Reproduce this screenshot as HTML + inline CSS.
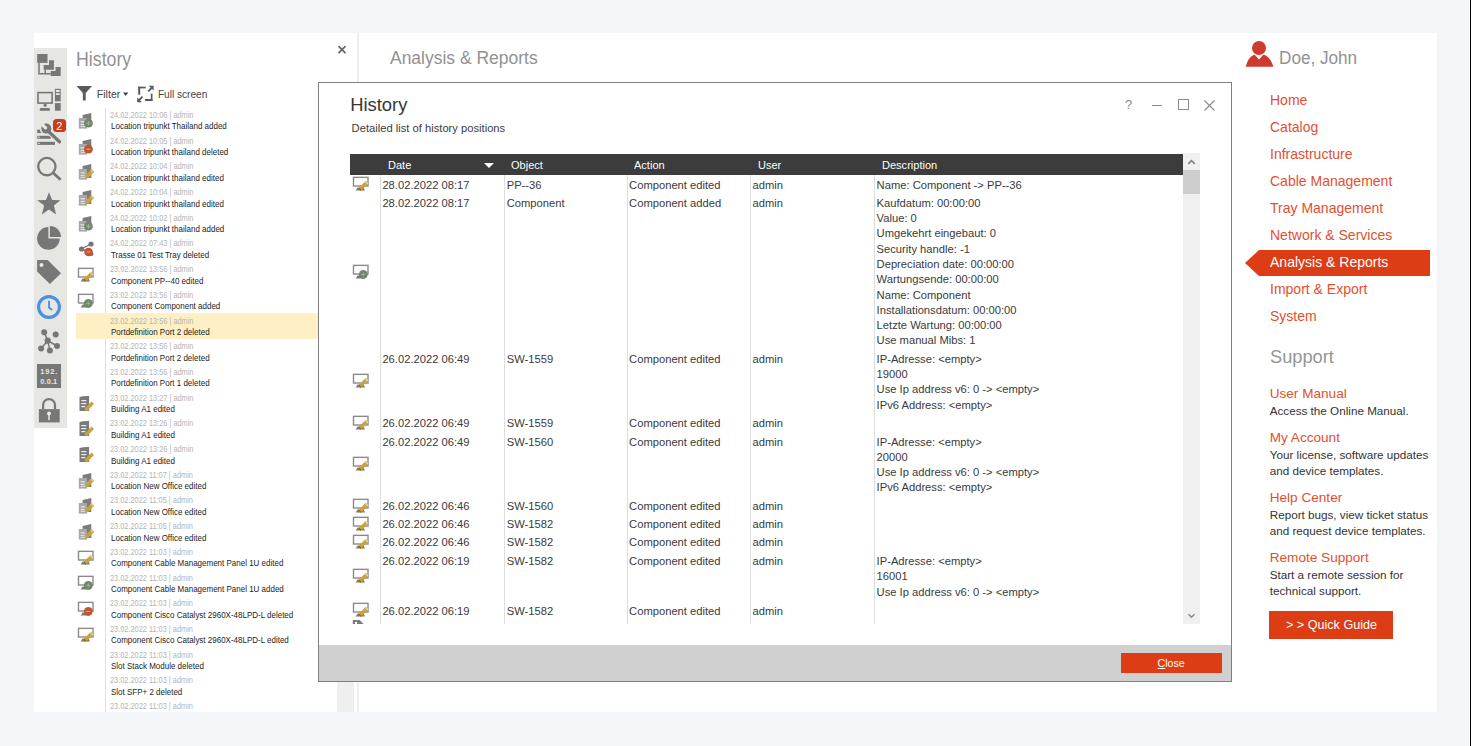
<!DOCTYPE html>
<html><head><meta charset="utf-8"><title>History</title>
<style>
html,body{margin:0;padding:0;}
body{width:1471px;height:746px;background:#f4f5f9;position:relative;overflow:hidden;font-family:"Liberation Sans", sans-serif;}
.t{position:absolute;white-space:nowrap;line-height:1;}
.r{position:absolute;}
svg.r{overflow:visible}
</style></head><body>
<div class="r" style="left:1469.00px;top:0.00px;width:1.00px;height:746.00px;background:#fbfbfd;"></div>
<div class="r" style="left:1470.00px;top:0.00px;width:1.00px;height:746.00px;background:#000000;"></div>
<div class="r" style="left:34.00px;top:33.00px;width:1403.00px;height:679.00px;background:#ffffff;"></div>
<div class="r" style="left:34.00px;top:48.00px;width:33.00px;height:380.20px;background:#e6e6e3;"></div>
<svg class="r" style="left:34.00px;top:50.00px" width="30" height="30" viewBox="0 0 30 30">
<rect x="3.2" y="4" width="10.3" height="8.9" fill="#777777"/>
<path d="M15 10.25 H19.9 V19.7 H9.65 V15 H15 Z" fill="#777777"/>
<path d="M21.5 17 H26.7 V26.1 H16.7 V21.1 H21.5 Z" fill="#777777"/>
<path d="M5 12.9 V23.8 H16.7 M11.3 19.7 V23.8" stroke="#777777" stroke-width="1.5" fill="none"/>
</svg>
<svg class="r" style="left:34.00px;top:85.00px" width="30" height="30" viewBox="0 0 30 30">
<rect x="4" y="7.6" width="14.1" height="10.5" fill="none" stroke="#777777" stroke-width="1.6"/>
<rect x="9.65" y="18.5" width="2.9" height="3.2" fill="#777777"/>
<path d="M6.8 23.1 H14.9 Q15.9 23.1 15.9 24.1 V25.7 H5.8 V24.1 Q5.8 23.1 6.8 23.1 Z" fill="#777777"/>
<rect x="20.9" y="3.8" width="5.8" height="12.5" fill="#777777"/>
<rect x="21.9" y="5" width="3.8" height="2" fill="#e6e6e2"/>
<rect x="21.9" y="8.2" width="3.8" height="1.8" fill="#e6e6e2"/>
<rect x="20.9" y="18.1" width="5.8" height="7.6" fill="#777777"/>
</svg>
<svg class="r" style="left:34.00px;top:116.00px" width="34" height="34" viewBox="0 0 34 34">
<rect x="3.2" y="13.7" width="4.8" height="3.4" fill="#777777"/>
<rect x="3.2" y="19.8" width="13.7" height="3" fill="#777777"/>
<rect x="3.2" y="25.8" width="17.8" height="3.1" fill="#777777"/>
<rect x="4.2" y="20.7" width="1.5" height="1.2" fill="#e6e6e2"/>
<rect x="4.2" y="26.8" width="1.5" height="1.2" fill="#e6e6e2"/>
<path d="M14.5 15.5 L25.5 25.8" stroke="#e6e6e2" stroke-width="5.4" stroke-linecap="round"/>
<circle cx="12.3" cy="12.6" r="6.6" fill="#e6e6e2"/>
<path d="M14.5 15.5 L25.5 25.8" stroke="#777777" stroke-width="3.3" stroke-linecap="round"/>
<circle cx="12.3" cy="12.6" r="5" fill="#777777"/>
<path d="M11.6 11.9 L6 6.3" stroke="#e6e6e2" stroke-width="3.2" stroke-linecap="round"/>
</svg>
<div class="r" style="left:52.70px;top:119.00px;width:13.00px;height:13.20px;background:#cc3a1a;border-radius:3.5px"></div>
<div class="t" style="left:56.20px;top:120.59px;font-size:11px;color:#ffffff;">2</div>
<svg class="r" style="left:34.00px;top:152.00px" width="30" height="30" viewBox="0 0 30 30">
<circle cx="12.85" cy="14.6" r="8.65" fill="none" stroke="#777777" stroke-width="2.3"/>
<path d="M19 20.8 L26.6 27.8" stroke="#777777" stroke-width="2.9"/>
</svg>
<svg class="r" style="left:36.00px;top:191.00px" width="26" height="25" viewBox="0 0 26 25">
<path d="M13 1.3 L16.1 9 L24.5 9.2 L17.9 14.6 L20.1 23.4 L13 18.5 L5.9 23.4 L8.1 14.6 L1.1 9.2 L9.9 9 Z" fill="#777777"/>
</svg>
<svg class="r" style="left:34.00px;top:222.00px" width="30" height="30" viewBox="0 0 30 30">
<path d="M14.4 5.1 A11.3 11.3 0 1 0 25.7 16.4 L14.4 16.4 Z" fill="#777777"/>
<path d="M15.9 4 A11.1 11.1 0 0 1 27 15 L15.9 15 Z" fill="#777777"/>
</svg>
<svg class="r" style="left:34.00px;top:256.00px" width="30" height="30" viewBox="0 0 30 30">
<path d="M3.1 4 L13.7 4 L27 17.3 L15.9 28 L3.1 15.6 Z" fill="#777777"/>
<circle cx="7.5" cy="9.1" r="2" fill="#e6e6e2"/>
</svg>
<svg class="r" style="left:34.00px;top:292.00px" width="30" height="30" viewBox="0 0 30 30">
<circle cx="15" cy="15" r="10.4" fill="none" stroke="#4a8fe8" stroke-width="3.1"/>
<path d="M15 8.8 V15.6 L18.1 18.1" stroke="#4a8fe8" stroke-width="1.9" fill="none"/>
</svg>
<svg class="r" style="left:34.00px;top:327.00px" width="30" height="30" viewBox="0 0 30 30">
<path d="M10.2 5.3 L13.7 13.7 L7.1 21.6 M13.7 13.7 L15.9 23.4 M13.7 13.7 L23 19" stroke="#777777" stroke-width="1.5" fill="none"/>
<circle cx="10.2" cy="5.3" r="3" fill="#777777"/>
<circle cx="21.7" cy="7.5" r="3" fill="#777777"/>
<circle cx="13.7" cy="13.7" r="3.1" fill="#777777"/>
<circle cx="7.1" cy="21.6" r="3" fill="#777777"/>
<circle cx="15.9" cy="23.4" r="3" fill="#777777"/>
<circle cx="23" cy="19" r="3" fill="#777777"/>
</svg>
<div class="r" style="left:37.10px;top:364.00px;width:23.90px;height:23.90px;background:#777777;"></div>
<div class="t" style="left:40.20px;top:367.94px;font-size:7.4px;color:#e8e8e8;letter-spacing:0.9px;font-weight:bold">192.</div>
<div class="t" style="left:40.20px;top:377.64px;font-size:7.4px;color:#e8e8e8;letter-spacing:0.15px;font-weight:bold">0.0.1</div>
<svg class="r" style="left:36.00px;top:397.00px" width="26" height="27" viewBox="0 0 26 27">
<path d="M7.1 12.1 V8.05 A5.95 5.95 0 0 1 19 8.05 V12.1" stroke="#777777" stroke-width="2.2" fill="none"/>
<rect x="2.9" y="12.1" width="20.8" height="13.3" fill="#777777"/>
<circle cx="13" cy="16.5" r="1.9" fill="#eeeeee"/>
<rect x="12.3" y="16.5" width="1.4" height="6.7" fill="#eeeeee"/>
</svg>
<div class="t" style="left:76.10px;top:49.99px;font-size:19.5px;color:#929292;transform:scaleX(0.91);transform-origin:0 0;">History</div>
<svg class="r" style="left:337.00px;top:45.00px" width="10" height="10" viewBox="0 0 10 10"><path d="M1.5 1.2 L8.5 8.2 M8.5 1.2 L1.5 8.2" stroke="#666" stroke-width="1.7"/></svg>
<svg class="r" style="left:74.00px;top:83.00px" width="20" height="20" viewBox="0 0 20 20"><path d="M2.6 3.1 H18 L11.7 10 V17.4 H8.85 V10 Z" fill="#5a5a5a"/></svg>
<div class="t" style="left:96.80px;top:88.93px;font-size:10.6px;color:#444;">Filter</div>
<svg class="r" style="left:122.00px;top:91.00px" width="8" height="6" viewBox="0 0 8 6"><path d="M1.1 1.4 H6.3 L3.7 4.9 Z" fill="#444"/></svg>
<svg class="r" style="left:136.00px;top:84.00px" width="20" height="20" viewBox="0 0 20 20"><g fill="#5a5a5a">
<rect x="2.2" y="2.7" width="7.5" height="1.7"/><rect x="2.2" y="2.7" width="2" height="8"/>
<rect x="9.1" y="15" width="7.4" height="2"/><rect x="14.8" y="9.6" width="1.7" height="7.4"/>
</g><g stroke="#5a5a5a" stroke-width="1.8" fill="none">
<path d="M12.2 7.3 L16.6 3"/><path d="M6.5 12.7 L2.2 17"/></g>
<path d="M17.6 1.7 L17.6 6.6 L12.7 1.7 Z" fill="#5a5a5a"/>
<path d="M1.2 18.3 L1.2 13.4 L6.1 18.3 Z" fill="#5a5a5a"/>
</svg>
<div class="t" style="left:157.90px;top:89.85px;font-size:10.1px;color:#444;">Full screen</div>
<div class="r" style="left:105.00px;top:107.80px;width:1.00px;height:604.20px;background:#e0e0e0;"></div>
<div class="r" style="left:75.60px;top:313.30px;width:260.00px;height:25.70px;background:#fef0c4;"></div>
<div class="t" style="left:110.00px;top:111.96px;font-size:8.2px;color:#b4b4b4;transform:scaleX(0.9);transform-origin:0 0;">24.02.2022 10:06 | admin</div>
<div class="t" style="left:111.00px;top:122.40px;font-size:8.5px;color:#1c1c1c;transform:scaleX(0.94);transform-origin:0 0;">Location tripunkt Thailand added</div>
<svg class="r" style="left:78.00px;top:112.80px" width="16" height="16" viewBox="0 0 16 16"><path d="M4.6 2.1 L13.3 0.1 V14.1 H4.6 Z" fill="#7c7c7c"/><rect x="0.8" y="5" width="8.2" height="10.6" fill="#a8a8a8"/><rect x="2.6" y="8.2" width="4.2" height="1.2" fill="#e6e6e6"/><rect x="2.6" y="10.9" width="4.2" height="1" fill="#e6e6e6"/><rect x="2.6" y="12.8" width="4.2" height="1" fill="#e6e6e6"/><circle cx="10.4" cy="10.2" r="4.4" fill="#718868"/><path d="M10.4 8 V12.4 M8.2 10.2 H12.6" stroke="#a6b8a2" stroke-width="0.9"/></svg>
<div class="t" style="left:110.00px;top:137.66px;font-size:8.2px;color:#b4b4b4;transform:scaleX(0.9);transform-origin:0 0;">24.02.2022 10:05 | admin</div>
<div class="t" style="left:111.00px;top:148.10px;font-size:8.5px;color:#1c1c1c;transform:scaleX(0.94);transform-origin:0 0;">Location tripunkt thailand deleted</div>
<svg class="r" style="left:78.00px;top:138.50px" width="16" height="16" viewBox="0 0 16 16"><path d="M4.6 2.1 L13.3 0.1 V14.1 H4.6 Z" fill="#7c7c7c"/><rect x="0.8" y="5" width="8.2" height="10.6" fill="#a8a8a8"/><rect x="2.6" y="8.2" width="4.2" height="1.2" fill="#e6e6e6"/><rect x="2.6" y="10.9" width="4.2" height="1" fill="#e6e6e6"/><rect x="2.6" y="12.8" width="4.2" height="1" fill="#e6e6e6"/><circle cx="10.4" cy="10.2" r="4.4" fill="#c4532b"/><path d="M8.4 10.2 H12.4" stroke="#e6a888" stroke-width="1.1"/></svg>
<div class="t" style="left:110.00px;top:163.36px;font-size:8.2px;color:#b4b4b4;transform:scaleX(0.9);transform-origin:0 0;">24.02.2022 10:04 | admin</div>
<div class="t" style="left:111.00px;top:173.80px;font-size:8.5px;color:#1c1c1c;transform:scaleX(0.94);transform-origin:0 0;">Location tripunkt thailand edited</div>
<svg class="r" style="left:78.00px;top:164.20px" width="16" height="16" viewBox="0 0 16 16"><path d="M4.6 2.1 L13.3 0.1 V14.1 H4.6 Z" fill="#7c7c7c"/><rect x="0.8" y="5" width="8.2" height="10.6" fill="#a8a8a8"/><rect x="2.6" y="8.2" width="4.2" height="1.2" fill="#e6e6e6"/><rect x="2.6" y="10.9" width="4.2" height="1" fill="#e6e6e6"/><rect x="2.6" y="12.8" width="4.2" height="1" fill="#e6e6e6"/><path d="M8.3 13 L14.9 6.4" stroke="#c9a23c" stroke-width="3.9" stroke-linecap="butt"/><path d="M13.6 7.7 L14.9 6.4" stroke="#d8c890" stroke-width="3.9"/></svg>
<div class="t" style="left:110.00px;top:189.06px;font-size:8.2px;color:#b4b4b4;transform:scaleX(0.9);transform-origin:0 0;">24.02.2022 10:04 | admin</div>
<div class="t" style="left:111.00px;top:199.50px;font-size:8.5px;color:#1c1c1c;transform:scaleX(0.94);transform-origin:0 0;">Location tripunkt thailand edited</div>
<svg class="r" style="left:78.00px;top:189.90px" width="16" height="16" viewBox="0 0 16 16"><path d="M4.6 2.1 L13.3 0.1 V14.1 H4.6 Z" fill="#7c7c7c"/><rect x="0.8" y="5" width="8.2" height="10.6" fill="#a8a8a8"/><rect x="2.6" y="8.2" width="4.2" height="1.2" fill="#e6e6e6"/><rect x="2.6" y="10.9" width="4.2" height="1" fill="#e6e6e6"/><rect x="2.6" y="12.8" width="4.2" height="1" fill="#e6e6e6"/><path d="M8.3 13 L14.9 6.4" stroke="#c9a23c" stroke-width="3.9" stroke-linecap="butt"/><path d="M13.6 7.7 L14.9 6.4" stroke="#d8c890" stroke-width="3.9"/></svg>
<div class="t" style="left:110.00px;top:214.76px;font-size:8.2px;color:#b4b4b4;transform:scaleX(0.9);transform-origin:0 0;">24.02.2022 10:02 | admin</div>
<div class="t" style="left:111.00px;top:225.20px;font-size:8.5px;color:#1c1c1c;transform:scaleX(0.94);transform-origin:0 0;">Location tripunkt thailand added</div>
<svg class="r" style="left:78.00px;top:215.60px" width="16" height="16" viewBox="0 0 16 16"><path d="M4.6 2.1 L13.3 0.1 V14.1 H4.6 Z" fill="#7c7c7c"/><rect x="0.8" y="5" width="8.2" height="10.6" fill="#a8a8a8"/><rect x="2.6" y="8.2" width="4.2" height="1.2" fill="#e6e6e6"/><rect x="2.6" y="10.9" width="4.2" height="1" fill="#e6e6e6"/><rect x="2.6" y="12.8" width="4.2" height="1" fill="#e6e6e6"/><circle cx="10.4" cy="10.2" r="4.4" fill="#718868"/><path d="M10.4 8 V12.4 M8.2 10.2 H12.6" stroke="#a6b8a2" stroke-width="0.9"/></svg>
<div class="t" style="left:110.00px;top:240.46px;font-size:8.2px;color:#b4b4b4;transform:scaleX(0.9);transform-origin:0 0;">24.02.2022 07:43 | admin</div>
<div class="t" style="left:111.00px;top:250.90px;font-size:8.5px;color:#1c1c1c;transform:scaleX(0.94);transform-origin:0 0;">Trasse 01 Test Tray deleted</div>
<svg class="r" style="left:78.00px;top:241.30px" width="16" height="16" viewBox="0 0 16 16"><path d="M3.5 8 L13 3 M3.5 8 L11 11" stroke="#777" stroke-width="1.4"/><circle cx="3.5" cy="8" r="2.6" fill="#777"/><circle cx="13" cy="3" r="2.6" fill="#777"/><circle cx="13.5" cy="13" r="2" fill="#777"/><circle cx="10.5" cy="11" r="4.3" fill="#c4532b"/><path d="M8.5 11 H12.5" stroke="#e6a888" stroke-width="1"/></svg>
<div class="t" style="left:110.00px;top:266.16px;font-size:8.2px;color:#b4b4b4;transform:scaleX(0.9);transform-origin:0 0;">23.02.2022 13:56 | admin</div>
<div class="t" style="left:111.00px;top:276.60px;font-size:8.5px;color:#1c1c1c;transform:scaleX(0.94);transform-origin:0 0;">Component PP--40 edited</div>
<svg class="r" style="left:77.40px;top:267.80px" width="16" height="16" viewBox="0 0 16 16"><rect x="1.5" y="0.35" width="14.5" height="8.65" fill="#fff" stroke="#8a8a8a" stroke-width="1.4"/><path d="M3.6 13.6 L5.6 10.6 H11.5 L13 13.6 Z" fill="#7a7a7a"/><path d="M7.4 12.8 L15.2 5" stroke="#c9a23c" stroke-width="3.7" stroke-linecap="butt"/><path d="M13.9 6.3 L15.2 5" stroke="#e0d0a0" stroke-width="3.7"/><path d="M7.4 12.8 L8.4 11.8" stroke="#8a6a20" stroke-width="3"/></svg>
<div class="t" style="left:110.00px;top:291.86px;font-size:8.2px;color:#b4b4b4;transform:scaleX(0.9);transform-origin:0 0;">23.02.2022 13:56 | admin</div>
<div class="t" style="left:111.00px;top:302.30px;font-size:8.5px;color:#1c1c1c;transform:scaleX(0.94);transform-origin:0 0;">Component Component added</div>
<svg class="r" style="left:77.40px;top:293.50px" width="16" height="16" viewBox="0 0 16 16"><rect x="1.5" y="0.35" width="14.5" height="8.65" fill="#fff" stroke="#8a8a8a" stroke-width="1.4"/><path d="M3.6 13.6 L5.6 10.6 H11.5 L13 13.6 Z" fill="#7a7a7a"/><circle cx="11.3" cy="9.4" r="4.4" fill="#718868"/><path d="M11.3 7.4 V11.4 M9.3 9.4 H13.3" stroke="#a6b8a2" stroke-width="0.8"/></svg>
<div class="t" style="left:110.00px;top:317.56px;font-size:8.2px;color:#b4b4b4;transform:scaleX(0.9);transform-origin:0 0;">23.02.2022 13:56 | admin</div>
<div class="t" style="left:111.00px;top:328.00px;font-size:8.5px;color:#1c1c1c;transform:scaleX(0.94);transform-origin:0 0;">Portdefinition Port 2 deleted</div>
<div class="t" style="left:110.00px;top:343.26px;font-size:8.2px;color:#b4b4b4;transform:scaleX(0.9);transform-origin:0 0;">23.02.2022 13:56 | admin</div>
<div class="t" style="left:111.00px;top:353.70px;font-size:8.5px;color:#1c1c1c;transform:scaleX(0.94);transform-origin:0 0;">Portdefinition Port 2 deleted</div>
<div class="t" style="left:110.00px;top:368.96px;font-size:8.2px;color:#b4b4b4;transform:scaleX(0.9);transform-origin:0 0;">23.02.2022 13:56 | admin</div>
<div class="t" style="left:111.00px;top:379.40px;font-size:8.5px;color:#1c1c1c;transform:scaleX(0.94);transform-origin:0 0;">Portdefinition Port 1 deleted</div>
<div class="t" style="left:110.00px;top:394.66px;font-size:8.2px;color:#b4b4b4;transform:scaleX(0.9);transform-origin:0 0;">23.02.2022 13:27 | admin</div>
<div class="t" style="left:111.00px;top:405.10px;font-size:8.5px;color:#1c1c1c;transform:scaleX(0.94);transform-origin:0 0;">Building A1 edited</div>
<svg class="r" style="left:78.00px;top:395.50px" width="16" height="16" viewBox="0 0 16 16"><path d="M1.5 1 Q6 -0.3 11.1 0 V14.9 H1.5 Z" fill="#7a7a7a"/><rect x="3.3" y="4" width="5" height="1.2" fill="#eee"/><rect x="3.3" y="7" width="5" height="1.2" fill="#eee"/><rect x="3.3" y="10" width="4" height="1.2" fill="#eee"/><path d="M7.5 14.2 L14.8 6.8" stroke="#c9a23c" stroke-width="3.4" stroke-linecap="butt"/></svg>
<div class="t" style="left:110.00px;top:420.36px;font-size:8.2px;color:#b4b4b4;transform:scaleX(0.9);transform-origin:0 0;">23.02.2022 13:26 | admin</div>
<div class="t" style="left:111.00px;top:430.80px;font-size:8.5px;color:#1c1c1c;transform:scaleX(0.94);transform-origin:0 0;">Building A1 edited</div>
<svg class="r" style="left:78.00px;top:421.20px" width="16" height="16" viewBox="0 0 16 16"><path d="M1.5 1 Q6 -0.3 11.1 0 V14.9 H1.5 Z" fill="#7a7a7a"/><rect x="3.3" y="4" width="5" height="1.2" fill="#eee"/><rect x="3.3" y="7" width="5" height="1.2" fill="#eee"/><rect x="3.3" y="10" width="4" height="1.2" fill="#eee"/><path d="M7.5 14.2 L14.8 6.8" stroke="#c9a23c" stroke-width="3.4" stroke-linecap="butt"/></svg>
<div class="t" style="left:110.00px;top:446.06px;font-size:8.2px;color:#b4b4b4;transform:scaleX(0.9);transform-origin:0 0;">23.02.2022 13:26 | admin</div>
<div class="t" style="left:111.00px;top:456.50px;font-size:8.5px;color:#1c1c1c;transform:scaleX(0.94);transform-origin:0 0;">Building A1 edited</div>
<svg class="r" style="left:78.00px;top:446.90px" width="16" height="16" viewBox="0 0 16 16"><path d="M1.5 1 Q6 -0.3 11.1 0 V14.9 H1.5 Z" fill="#7a7a7a"/><rect x="3.3" y="4" width="5" height="1.2" fill="#eee"/><rect x="3.3" y="7" width="5" height="1.2" fill="#eee"/><rect x="3.3" y="10" width="4" height="1.2" fill="#eee"/><path d="M7.5 14.2 L14.8 6.8" stroke="#c9a23c" stroke-width="3.4" stroke-linecap="butt"/></svg>
<div class="t" style="left:110.00px;top:471.76px;font-size:8.2px;color:#b4b4b4;transform:scaleX(0.9);transform-origin:0 0;">23.02.2022 11:07 | admin</div>
<div class="t" style="left:111.00px;top:482.20px;font-size:8.5px;color:#1c1c1c;transform:scaleX(0.94);transform-origin:0 0;">Location New Office edited</div>
<svg class="r" style="left:78.00px;top:472.60px" width="16" height="16" viewBox="0 0 16 16"><path d="M4.6 2.1 L13.3 0.1 V14.1 H4.6 Z" fill="#7c7c7c"/><rect x="0.8" y="5" width="8.2" height="10.6" fill="#a8a8a8"/><rect x="2.6" y="8.2" width="4.2" height="1.2" fill="#e6e6e6"/><rect x="2.6" y="10.9" width="4.2" height="1" fill="#e6e6e6"/><rect x="2.6" y="12.8" width="4.2" height="1" fill="#e6e6e6"/><path d="M8.3 13 L14.9 6.4" stroke="#c9a23c" stroke-width="3.9" stroke-linecap="butt"/><path d="M13.6 7.7 L14.9 6.4" stroke="#d8c890" stroke-width="3.9"/></svg>
<div class="t" style="left:110.00px;top:497.46px;font-size:8.2px;color:#b4b4b4;transform:scaleX(0.9);transform-origin:0 0;">23.02.2022 11:05 | admin</div>
<div class="t" style="left:111.00px;top:507.90px;font-size:8.5px;color:#1c1c1c;transform:scaleX(0.94);transform-origin:0 0;">Location New Office edited</div>
<svg class="r" style="left:78.00px;top:498.30px" width="16" height="16" viewBox="0 0 16 16"><path d="M4.6 2.1 L13.3 0.1 V14.1 H4.6 Z" fill="#7c7c7c"/><rect x="0.8" y="5" width="8.2" height="10.6" fill="#a8a8a8"/><rect x="2.6" y="8.2" width="4.2" height="1.2" fill="#e6e6e6"/><rect x="2.6" y="10.9" width="4.2" height="1" fill="#e6e6e6"/><rect x="2.6" y="12.8" width="4.2" height="1" fill="#e6e6e6"/><path d="M8.3 13 L14.9 6.4" stroke="#c9a23c" stroke-width="3.9" stroke-linecap="butt"/><path d="M13.6 7.7 L14.9 6.4" stroke="#d8c890" stroke-width="3.9"/></svg>
<div class="t" style="left:110.00px;top:523.16px;font-size:8.2px;color:#b4b4b4;transform:scaleX(0.9);transform-origin:0 0;">23.02.2022 11:05 | admin</div>
<div class="t" style="left:111.00px;top:533.60px;font-size:8.5px;color:#1c1c1c;transform:scaleX(0.94);transform-origin:0 0;">Location New Office edited</div>
<svg class="r" style="left:78.00px;top:524.00px" width="16" height="16" viewBox="0 0 16 16"><path d="M4.6 2.1 L13.3 0.1 V14.1 H4.6 Z" fill="#7c7c7c"/><rect x="0.8" y="5" width="8.2" height="10.6" fill="#a8a8a8"/><rect x="2.6" y="8.2" width="4.2" height="1.2" fill="#e6e6e6"/><rect x="2.6" y="10.9" width="4.2" height="1" fill="#e6e6e6"/><rect x="2.6" y="12.8" width="4.2" height="1" fill="#e6e6e6"/><path d="M8.3 13 L14.9 6.4" stroke="#c9a23c" stroke-width="3.9" stroke-linecap="butt"/><path d="M13.6 7.7 L14.9 6.4" stroke="#d8c890" stroke-width="3.9"/></svg>
<div class="t" style="left:110.00px;top:548.86px;font-size:8.2px;color:#b4b4b4;transform:scaleX(0.9);transform-origin:0 0;">23.02.2022 11:03 | admin</div>
<div class="t" style="left:111.00px;top:559.30px;font-size:8.5px;color:#1c1c1c;transform:scaleX(0.94);transform-origin:0 0;">Component Cable Management Panel 1U edited</div>
<svg class="r" style="left:77.40px;top:550.50px" width="16" height="16" viewBox="0 0 16 16"><rect x="1.5" y="0.35" width="14.5" height="8.65" fill="#fff" stroke="#8a8a8a" stroke-width="1.4"/><path d="M3.6 13.6 L5.6 10.6 H11.5 L13 13.6 Z" fill="#7a7a7a"/><path d="M7.4 12.8 L15.2 5" stroke="#c9a23c" stroke-width="3.7" stroke-linecap="butt"/><path d="M13.9 6.3 L15.2 5" stroke="#e0d0a0" stroke-width="3.7"/><path d="M7.4 12.8 L8.4 11.8" stroke="#8a6a20" stroke-width="3"/></svg>
<div class="t" style="left:110.00px;top:574.56px;font-size:8.2px;color:#b4b4b4;transform:scaleX(0.9);transform-origin:0 0;">23.02.2022 11:03 | admin</div>
<div class="t" style="left:111.00px;top:585.00px;font-size:8.5px;color:#1c1c1c;transform:scaleX(0.94);transform-origin:0 0;">Component Cable Management Panel 1U added</div>
<svg class="r" style="left:77.40px;top:576.20px" width="16" height="16" viewBox="0 0 16 16"><rect x="1.5" y="0.35" width="14.5" height="8.65" fill="#fff" stroke="#8a8a8a" stroke-width="1.4"/><path d="M3.6 13.6 L5.6 10.6 H11.5 L13 13.6 Z" fill="#7a7a7a"/><circle cx="11.3" cy="9.4" r="4.4" fill="#718868"/><path d="M11.3 7.4 V11.4 M9.3 9.4 H13.3" stroke="#a6b8a2" stroke-width="0.8"/></svg>
<div class="t" style="left:110.00px;top:600.26px;font-size:8.2px;color:#b4b4b4;transform:scaleX(0.9);transform-origin:0 0;">23.02.2022 11:03 | admin</div>
<div class="t" style="left:111.00px;top:610.70px;font-size:8.5px;color:#1c1c1c;transform:scaleX(0.94);transform-origin:0 0;">Component Cisco Catalyst 2960X-48LPD-L deleted</div>
<svg class="r" style="left:77.40px;top:601.90px" width="16" height="16" viewBox="0 0 16 16"><rect x="1.5" y="0.35" width="14.5" height="8.65" fill="#fff" stroke="#8a8a8a" stroke-width="1.4"/><path d="M3.6 13.6 L5.6 10.6 H11.5 L13 13.6 Z" fill="#7a7a7a"/><circle cx="11.3" cy="9.4" r="4.4" fill="#c4532b"/><path d="M9.3 9.4 H13.3" stroke="#e6a888" stroke-width="1"/></svg>
<div class="t" style="left:110.00px;top:625.96px;font-size:8.2px;color:#b4b4b4;transform:scaleX(0.9);transform-origin:0 0;">23.02.2022 11:03 | admin</div>
<div class="t" style="left:111.00px;top:636.40px;font-size:8.5px;color:#1c1c1c;transform:scaleX(0.94);transform-origin:0 0;">Component Cisco Catalyst 2960X-48LPD-L edited</div>
<svg class="r" style="left:77.40px;top:627.60px" width="16" height="16" viewBox="0 0 16 16"><rect x="1.5" y="0.35" width="14.5" height="8.65" fill="#fff" stroke="#8a8a8a" stroke-width="1.4"/><path d="M3.6 13.6 L5.6 10.6 H11.5 L13 13.6 Z" fill="#7a7a7a"/><path d="M7.4 12.8 L15.2 5" stroke="#c9a23c" stroke-width="3.7" stroke-linecap="butt"/><path d="M13.9 6.3 L15.2 5" stroke="#e0d0a0" stroke-width="3.7"/><path d="M7.4 12.8 L8.4 11.8" stroke="#8a6a20" stroke-width="3"/></svg>
<div class="t" style="left:110.00px;top:651.66px;font-size:8.2px;color:#b4b4b4;transform:scaleX(0.9);transform-origin:0 0;">23.02.2022 11:03 | admin</div>
<div class="t" style="left:111.00px;top:662.10px;font-size:8.5px;color:#1c1c1c;transform:scaleX(0.94);transform-origin:0 0;">Slot Stack Module deleted</div>
<div class="t" style="left:110.00px;top:677.36px;font-size:8.2px;color:#b4b4b4;transform:scaleX(0.9);transform-origin:0 0;">23.02.2022 11:03 | admin</div>
<div class="t" style="left:111.00px;top:687.80px;font-size:8.5px;color:#1c1c1c;transform:scaleX(0.94);transform-origin:0 0;">Slot SFP+ 2 deleted</div>
<div class="t" style="left:110.00px;top:703.06px;font-size:8.2px;color:#b4b4b4;transform:scaleX(0.9);transform-origin:0 0;">23.02.2022 11:03 | admin</div>
<div class="r" style="left:34.00px;top:712.00px;width:310.00px;height:34.00px;background:#f4f5f9;"></div>
<div class="r" style="left:336.80px;top:100.00px;width:17.50px;height:612.00px;background:#efefef;"></div>
<div class="r" style="left:357.00px;top:33.00px;width:1.50px;height:679.00px;background:#eceef2;"></div>
<div class="t" style="left:389.70px;top:48.80px;font-size:18.9px;color:#929292;transform:scaleX(0.925);transform-origin:0 0;">Analysis &amp; Reports</div>
<svg class="r" style="left:1245.00px;top:40.00px" width="29" height="28" viewBox="0 0 29 28"><circle cx="14" cy="8" r="7" fill="#d0392b"/>
<path d="M0.7 26.8 Q3 17 9.5 14.5 L14 19.5 L18.5 14.5 Q25.5 17 28.4 26.8 Z" fill="#d0392b"/></svg>
<div class="t" style="left:1279.30px;top:49.17px;font-size:18.7px;color:#929292;transform:scaleX(0.917);transform-origin:0 0;">Doe, John</div>
<div class="t" style="left:1269.60px;top:92.77px;font-size:14.8px;color:#e2502f;transform:scaleX(0.947);transform-origin:0 0;">Home</div>
<div class="t" style="left:1269.60px;top:119.82px;font-size:14.8px;color:#e2502f;transform:scaleX(0.947);transform-origin:0 0;">Catalog</div>
<div class="t" style="left:1269.60px;top:146.87px;font-size:14.8px;color:#e2502f;transform:scaleX(0.947);transform-origin:0 0;">Infrastructure</div>
<div class="t" style="left:1269.60px;top:173.92px;font-size:14.8px;color:#e2502f;transform:scaleX(0.947);transform-origin:0 0;">Cable Management</div>
<div class="t" style="left:1269.60px;top:200.97px;font-size:14.8px;color:#e2502f;transform:scaleX(0.947);transform-origin:0 0;">Tray Management</div>
<div class="t" style="left:1269.60px;top:228.02px;font-size:14.8px;color:#e2502f;transform:scaleX(0.947);transform-origin:0 0;">Network &amp; Services</div>
<svg class="r" style="left:1245.00px;top:250.00px" width="185" height="26" viewBox="0 0 185 26"><path d="M0 13 L14 0 H185 V26 H14 Z" fill="#dc3d14"/></svg>
<div class="t" style="left:1269.60px;top:255.07px;font-size:14.8px;color:#ffffff;transform:scaleX(0.947);transform-origin:0 0;">Analysis &amp; Reports</div>
<div class="t" style="left:1269.60px;top:282.12px;font-size:14.8px;color:#e2502f;transform:scaleX(0.947);transform-origin:0 0;">Import &amp; Export</div>
<div class="t" style="left:1269.60px;top:309.17px;font-size:14.8px;color:#e2502f;transform:scaleX(0.947);transform-origin:0 0;">System</div>
<div class="t" style="left:1270.00px;top:348.00px;font-size:18.9px;color:#959595;transform:scaleX(0.965);transform-origin:0 0;">Support</div>
<div class="t" style="left:1269.70px;top:387.39px;font-size:13.6px;color:#e2502f;">User Manual</div>
<div class="t" style="left:1269.70px;top:405.00px;font-size:11.7px;color:#333333;">Access the Online Manual.</div>
<div class="t" style="left:1269.70px;top:431.49px;font-size:13.6px;color:#e2502f;">My Account</div>
<div class="t" style="left:1269.70px;top:449.10px;font-size:11.7px;color:#333333;">Your license, software updates</div>
<div class="t" style="left:1269.70px;top:464.80px;font-size:11.7px;color:#333333;">and device templates.</div>
<div class="t" style="left:1269.70px;top:491.29px;font-size:13.6px;color:#e2502f;">Help Center</div>
<div class="t" style="left:1269.70px;top:508.90px;font-size:11.7px;color:#333333;">Report bugs, view ticket status</div>
<div class="t" style="left:1269.70px;top:524.60px;font-size:11.7px;color:#333333;">and request device templates.</div>
<div class="t" style="left:1269.70px;top:551.19px;font-size:13.6px;color:#e2502f;">Remote Support</div>
<div class="t" style="left:1269.70px;top:568.80px;font-size:11.7px;color:#333333;">Start a remote session for</div>
<div class="t" style="left:1269.70px;top:584.50px;font-size:11.7px;color:#333333;">technical support.</div>
<div class="r" style="left:1269.40px;top:610.60px;width:123.50px;height:28.20px;background:#dc3d14;"></div>
<div class="t" style="left:1286.00px;top:618.73px;font-size:12.6px;color:#ffffff;">&gt; &gt; Quick Guide</div>
<div class="r" style="left:318.00px;top:82.00px;width:914.00px;height:600.00px;background:#ffffff;box-sizing:border-box;border:1.5px solid #808080"></div>
<div class="t" style="left:350.20px;top:96.32px;font-size:18.4px;color:#363636;">History</div>
<div class="t" style="left:351.60px;top:122.52px;font-size:11.2px;color:#3c3c3c;">Detailed list of history positions</div>
<div class="t" style="left:1125.00px;top:98.20px;font-size:13px;color:#8a8a8a;">?</div>
<div class="r" style="left:1152.00px;top:104.60px;width:9.50px;height:1.20px;background:#8a8a8a;"></div>
<div class="r" style="left:1177.50px;top:99.10px;width:11.40px;height:10.60px;background:transparent;box-sizing:border-box;border:1.2px solid #8a8a8a"></div>
<svg class="r" style="left:1203.50px;top:99.50px" width="11" height="11" viewBox="0 0 11 11"><path d="M0.5 0.5 L10.5 10.5 M10.5 0.5 L0.5 10.5" stroke="#8a8a8a" stroke-width="1.1"/></svg>
<div class="r" style="left:350.20px;top:153.60px;width:832.80px;height:21.20px;background:#3c3c3c;"></div>
<div class="t" style="left:387.80px;top:160.01px;font-size:11.8px;color:#ffffff;transform:scaleX(0.935);transform-origin:0 0;">Date</div>
<div class="t" style="left:510.90px;top:160.01px;font-size:11.8px;color:#ffffff;transform:scaleX(0.935);transform-origin:0 0;">Object</div>
<div class="t" style="left:633.90px;top:160.01px;font-size:11.8px;color:#ffffff;transform:scaleX(0.935);transform-origin:0 0;">Action</div>
<div class="t" style="left:757.60px;top:160.01px;font-size:11.8px;color:#ffffff;transform:scaleX(0.935);transform-origin:0 0;">User</div>
<div class="t" style="left:881.70px;top:160.01px;font-size:11.8px;color:#ffffff;transform:scaleX(0.935);transform-origin:0 0;">Description</div>
<svg class="r" style="left:483.70px;top:163.20px" width="10" height="5" viewBox="0 0 10 5"><path d="M0 0 H10 L5 5 Z" fill="#ffffff"/></svg>
<div class="r" style="left:380.30px;top:174.80px;width:1.00px;height:449.00px;background:#dedede;"></div>
<div class="r" style="left:504.00px;top:174.80px;width:1.00px;height:449.00px;background:#dedede;"></div>
<div class="r" style="left:626.60px;top:174.80px;width:1.00px;height:449.00px;background:#dedede;"></div>
<div class="r" style="left:750.20px;top:174.80px;width:1.00px;height:449.00px;background:#dedede;"></div>
<div class="r" style="left:874.20px;top:174.80px;width:1.00px;height:449.00px;background:#dedede;"></div>
<div class="r" style="left:1183.00px;top:153.40px;width:17.00px;height:470.60px;background:#f0f0f0;"></div>
<div class="r" style="left:1183.00px;top:170.20px;width:17.00px;height:23.80px;background:#cdcdcd;"></div>
<svg class="r" style="left:1187.00px;top:158.50px" width="9" height="6" viewBox="0 0 9 6"><path d="M1.2 4.8 L4.5 1.6 L7.8 4.8" stroke="#858585" stroke-width="1.7" fill="none"/></svg>
<svg class="r" style="left:1187.00px;top:613.00px" width="9" height="6" viewBox="0 0 9 6"><path d="M1.5 1.2 L4.5 4.2 L7.5 1.2" stroke="#8a8a8a" stroke-width="1.5" fill="none"/></svg>
<div class="t" style="left:382.40px;top:179.57px;font-size:11.2px;color:#3a3a3a;">28.02.2022 08:17</div>
<div class="t" style="left:506.70px;top:179.57px;font-size:11.2px;color:#3a3a3a;">PP--36</div>
<div class="t" style="left:629.10px;top:179.57px;font-size:11.2px;color:#3a3a3a;">Component edited</div>
<div class="t" style="left:752.50px;top:179.57px;font-size:11.2px;color:#3a3a3a;">admin</div>
<div class="t" style="left:876.60px;top:179.57px;font-size:11.2px;color:#3a3a3a;">Name: Component -&gt; PP--36</div>
<svg class="r" style="left:352.00px;top:177.28px" width="16" height="16" viewBox="0 0 16 16"><rect x="1.5" y="0.35" width="14.5" height="8.65" fill="#fff" stroke="#8a8a8a" stroke-width="1.4"/><path d="M3.6 13.6 L5.6 10.6 H11.5 L13 13.6 Z" fill="#7a7a7a"/><path d="M7.4 12.8 L15.2 5" stroke="#c9a23c" stroke-width="3.7" stroke-linecap="butt"/><path d="M13.9 6.3 L15.2 5" stroke="#e0d0a0" stroke-width="3.7"/><path d="M7.4 12.8 L8.4 11.8" stroke="#8a6a20" stroke-width="3"/></svg>
<div class="t" style="left:382.40px;top:197.92px;font-size:11.2px;color:#3a3a3a;">28.02.2022 08:17</div>
<div class="t" style="left:506.70px;top:197.92px;font-size:11.2px;color:#3a3a3a;">Component</div>
<div class="t" style="left:629.10px;top:197.92px;font-size:11.2px;color:#3a3a3a;">Component added</div>
<div class="t" style="left:752.50px;top:197.92px;font-size:11.2px;color:#3a3a3a;">admin</div>
<div class="t" style="left:876.60px;top:197.92px;font-size:11.2px;color:#3a3a3a;">Kaufdatum: 00:00:00</div>
<div class="t" style="left:876.60px;top:213.20px;font-size:11.2px;color:#3a3a3a;">Value: 0</div>
<div class="t" style="left:876.60px;top:228.48px;font-size:11.2px;color:#3a3a3a;">Umgekehrt eingebaut: 0</div>
<div class="t" style="left:876.60px;top:243.76px;font-size:11.2px;color:#3a3a3a;">Security handle: -1</div>
<div class="t" style="left:876.60px;top:259.04px;font-size:11.2px;color:#3a3a3a;">Depreciation date: 00:00:00</div>
<div class="t" style="left:876.60px;top:274.32px;font-size:11.2px;color:#3a3a3a;">Wartungsende: 00:00:00</div>
<div class="t" style="left:876.60px;top:289.60px;font-size:11.2px;color:#3a3a3a;">Name: Component</div>
<div class="t" style="left:876.60px;top:304.88px;font-size:11.2px;color:#3a3a3a;">Installationsdatum: 00:00:00</div>
<div class="t" style="left:876.60px;top:320.16px;font-size:11.2px;color:#3a3a3a;">Letzte Wartung: 00:00:00</div>
<div class="t" style="left:876.60px;top:335.44px;font-size:11.2px;color:#3a3a3a;">Use manual Mibs: 1</div>
<svg class="r" style="left:352.00px;top:264.70px" width="16" height="16" viewBox="0 0 16 16"><rect x="1.5" y="0.35" width="14.5" height="8.65" fill="#fff" stroke="#8a8a8a" stroke-width="1.4"/><path d="M3.6 13.6 L5.6 10.6 H11.5 L13 13.6 Z" fill="#7a7a7a"/><circle cx="11.3" cy="9.4" r="4.4" fill="#718868"/><path d="M11.3 7.4 V11.4 M9.3 9.4 H13.3" stroke="#a6b8a2" stroke-width="0.8"/></svg>
<div class="t" style="left:382.40px;top:353.72px;font-size:11.2px;color:#3a3a3a;">26.02.2022 06:49</div>
<div class="t" style="left:506.70px;top:353.72px;font-size:11.2px;color:#3a3a3a;">SW-1559</div>
<div class="t" style="left:629.10px;top:353.72px;font-size:11.2px;color:#3a3a3a;">Component edited</div>
<div class="t" style="left:752.50px;top:353.72px;font-size:11.2px;color:#3a3a3a;">admin</div>
<div class="t" style="left:876.60px;top:353.72px;font-size:11.2px;color:#3a3a3a;">IP-Adresse: &lt;empty&gt;</div>
<div class="t" style="left:876.60px;top:369.02px;font-size:11.2px;color:#3a3a3a;">19000</div>
<div class="t" style="left:876.60px;top:384.32px;font-size:11.2px;color:#3a3a3a;">Use Ip address v6: 0 -&gt; &lt;empty&gt;</div>
<div class="t" style="left:876.60px;top:399.62px;font-size:11.2px;color:#3a3a3a;">IPv6 Address: &lt;empty&gt;</div>
<svg class="r" style="left:352.00px;top:374.45px" width="16" height="16" viewBox="0 0 16 16"><rect x="1.5" y="0.35" width="14.5" height="8.65" fill="#fff" stroke="#8a8a8a" stroke-width="1.4"/><path d="M3.6 13.6 L5.6 10.6 H11.5 L13 13.6 Z" fill="#7a7a7a"/><path d="M7.4 12.8 L15.2 5" stroke="#c9a23c" stroke-width="3.7" stroke-linecap="butt"/><path d="M13.9 6.3 L15.2 5" stroke="#e0d0a0" stroke-width="3.7"/><path d="M7.4 12.8 L8.4 11.8" stroke="#8a6a20" stroke-width="3"/></svg>
<div class="t" style="left:382.40px;top:418.32px;font-size:11.2px;color:#3a3a3a;">26.02.2022 06:49</div>
<div class="t" style="left:506.70px;top:418.32px;font-size:11.2px;color:#3a3a3a;">SW-1559</div>
<div class="t" style="left:629.10px;top:418.32px;font-size:11.2px;color:#3a3a3a;">Component edited</div>
<div class="t" style="left:752.50px;top:418.32px;font-size:11.2px;color:#3a3a3a;">admin</div>
<svg class="r" style="left:352.00px;top:416.03px" width="16" height="16" viewBox="0 0 16 16"><rect x="1.5" y="0.35" width="14.5" height="8.65" fill="#fff" stroke="#8a8a8a" stroke-width="1.4"/><path d="M3.6 13.6 L5.6 10.6 H11.5 L13 13.6 Z" fill="#7a7a7a"/><path d="M7.4 12.8 L15.2 5" stroke="#c9a23c" stroke-width="3.7" stroke-linecap="butt"/><path d="M13.9 6.3 L15.2 5" stroke="#e0d0a0" stroke-width="3.7"/><path d="M7.4 12.8 L8.4 11.8" stroke="#8a6a20" stroke-width="3"/></svg>
<div class="t" style="left:382.40px;top:436.52px;font-size:11.2px;color:#3a3a3a;">26.02.2022 06:49</div>
<div class="t" style="left:506.70px;top:436.52px;font-size:11.2px;color:#3a3a3a;">SW-1560</div>
<div class="t" style="left:629.10px;top:436.52px;font-size:11.2px;color:#3a3a3a;">Component edited</div>
<div class="t" style="left:752.50px;top:436.52px;font-size:11.2px;color:#3a3a3a;">admin</div>
<div class="t" style="left:876.60px;top:436.52px;font-size:11.2px;color:#3a3a3a;">IP-Adresse: &lt;empty&gt;</div>
<div class="t" style="left:876.60px;top:451.82px;font-size:11.2px;color:#3a3a3a;">20000</div>
<div class="t" style="left:876.60px;top:467.12px;font-size:11.2px;color:#3a3a3a;">Use Ip address v6: 0 -&gt; &lt;empty&gt;</div>
<div class="t" style="left:876.60px;top:482.42px;font-size:11.2px;color:#3a3a3a;">IPv6 Address: &lt;empty&gt;</div>
<svg class="r" style="left:352.00px;top:457.25px" width="16" height="16" viewBox="0 0 16 16"><rect x="1.5" y="0.35" width="14.5" height="8.65" fill="#fff" stroke="#8a8a8a" stroke-width="1.4"/><path d="M3.6 13.6 L5.6 10.6 H11.5 L13 13.6 Z" fill="#7a7a7a"/><path d="M7.4 12.8 L15.2 5" stroke="#c9a23c" stroke-width="3.7" stroke-linecap="butt"/><path d="M13.9 6.3 L15.2 5" stroke="#e0d0a0" stroke-width="3.7"/><path d="M7.4 12.8 L8.4 11.8" stroke="#8a6a20" stroke-width="3"/></svg>
<div class="t" style="left:382.40px;top:500.82px;font-size:11.2px;color:#3a3a3a;">26.02.2022 06:46</div>
<div class="t" style="left:506.70px;top:500.82px;font-size:11.2px;color:#3a3a3a;">SW-1560</div>
<div class="t" style="left:629.10px;top:500.82px;font-size:11.2px;color:#3a3a3a;">Component edited</div>
<div class="t" style="left:752.50px;top:500.82px;font-size:11.2px;color:#3a3a3a;">admin</div>
<svg class="r" style="left:352.00px;top:498.53px" width="16" height="16" viewBox="0 0 16 16"><rect x="1.5" y="0.35" width="14.5" height="8.65" fill="#fff" stroke="#8a8a8a" stroke-width="1.4"/><path d="M3.6 13.6 L5.6 10.6 H11.5 L13 13.6 Z" fill="#7a7a7a"/><path d="M7.4 12.8 L15.2 5" stroke="#c9a23c" stroke-width="3.7" stroke-linecap="butt"/><path d="M13.9 6.3 L15.2 5" stroke="#e0d0a0" stroke-width="3.7"/><path d="M7.4 12.8 L8.4 11.8" stroke="#8a6a20" stroke-width="3"/></svg>
<div class="t" style="left:382.40px;top:519.12px;font-size:11.2px;color:#3a3a3a;">26.02.2022 06:46</div>
<div class="t" style="left:506.70px;top:519.12px;font-size:11.2px;color:#3a3a3a;">SW-1582</div>
<div class="t" style="left:629.10px;top:519.12px;font-size:11.2px;color:#3a3a3a;">Component edited</div>
<div class="t" style="left:752.50px;top:519.12px;font-size:11.2px;color:#3a3a3a;">admin</div>
<svg class="r" style="left:352.00px;top:516.83px" width="16" height="16" viewBox="0 0 16 16"><rect x="1.5" y="0.35" width="14.5" height="8.65" fill="#fff" stroke="#8a8a8a" stroke-width="1.4"/><path d="M3.6 13.6 L5.6 10.6 H11.5 L13 13.6 Z" fill="#7a7a7a"/><path d="M7.4 12.8 L15.2 5" stroke="#c9a23c" stroke-width="3.7" stroke-linecap="butt"/><path d="M13.9 6.3 L15.2 5" stroke="#e0d0a0" stroke-width="3.7"/><path d="M7.4 12.8 L8.4 11.8" stroke="#8a6a20" stroke-width="3"/></svg>
<div class="t" style="left:382.40px;top:537.42px;font-size:11.2px;color:#3a3a3a;">26.02.2022 06:46</div>
<div class="t" style="left:506.70px;top:537.42px;font-size:11.2px;color:#3a3a3a;">SW-1582</div>
<div class="t" style="left:629.10px;top:537.42px;font-size:11.2px;color:#3a3a3a;">Component edited</div>
<div class="t" style="left:752.50px;top:537.42px;font-size:11.2px;color:#3a3a3a;">admin</div>
<svg class="r" style="left:352.00px;top:535.12px" width="16" height="16" viewBox="0 0 16 16"><rect x="1.5" y="0.35" width="14.5" height="8.65" fill="#fff" stroke="#8a8a8a" stroke-width="1.4"/><path d="M3.6 13.6 L5.6 10.6 H11.5 L13 13.6 Z" fill="#7a7a7a"/><path d="M7.4 12.8 L15.2 5" stroke="#c9a23c" stroke-width="3.7" stroke-linecap="butt"/><path d="M13.9 6.3 L15.2 5" stroke="#e0d0a0" stroke-width="3.7"/><path d="M7.4 12.8 L8.4 11.8" stroke="#8a6a20" stroke-width="3"/></svg>
<div class="t" style="left:382.40px;top:556.12px;font-size:11.2px;color:#3a3a3a;">26.02.2022 06:19</div>
<div class="t" style="left:506.70px;top:556.12px;font-size:11.2px;color:#3a3a3a;">SW-1582</div>
<div class="t" style="left:629.10px;top:556.12px;font-size:11.2px;color:#3a3a3a;">Component edited</div>
<div class="t" style="left:752.50px;top:556.12px;font-size:11.2px;color:#3a3a3a;">admin</div>
<div class="t" style="left:876.60px;top:556.12px;font-size:11.2px;color:#3a3a3a;">IP-Adresse: &lt;empty&gt;</div>
<div class="t" style="left:876.60px;top:571.42px;font-size:11.2px;color:#3a3a3a;">16001</div>
<div class="t" style="left:876.60px;top:586.72px;font-size:11.2px;color:#3a3a3a;">Use Ip address v6: 0 -&gt; &lt;empty&gt;</div>
<svg class="r" style="left:352.00px;top:569.18px" width="16" height="16" viewBox="0 0 16 16"><rect x="1.5" y="0.35" width="14.5" height="8.65" fill="#fff" stroke="#8a8a8a" stroke-width="1.4"/><path d="M3.6 13.6 L5.6 10.6 H11.5 L13 13.6 Z" fill="#7a7a7a"/><path d="M7.4 12.8 L15.2 5" stroke="#c9a23c" stroke-width="3.7" stroke-linecap="butt"/><path d="M13.9 6.3 L15.2 5" stroke="#e0d0a0" stroke-width="3.7"/><path d="M7.4 12.8 L8.4 11.8" stroke="#8a6a20" stroke-width="3"/></svg>
<div class="t" style="left:382.40px;top:605.77px;font-size:11.2px;color:#3a3a3a;">26.02.2022 06:19</div>
<div class="t" style="left:506.70px;top:605.77px;font-size:11.2px;color:#3a3a3a;">SW-1582</div>
<div class="t" style="left:629.10px;top:605.77px;font-size:11.2px;color:#3a3a3a;">Component edited</div>
<div class="t" style="left:752.50px;top:605.77px;font-size:11.2px;color:#3a3a3a;">admin</div>
<svg class="r" style="left:352.00px;top:603.48px" width="16" height="16" viewBox="0 0 16 16"><rect x="1.5" y="0.35" width="14.5" height="8.65" fill="#fff" stroke="#8a8a8a" stroke-width="1.4"/><path d="M3.6 13.6 L5.6 10.6 H11.5 L13 13.6 Z" fill="#7a7a7a"/><path d="M7.4 12.8 L15.2 5" stroke="#c9a23c" stroke-width="3.7" stroke-linecap="butt"/><path d="M13.9 6.3 L15.2 5" stroke="#e0d0a0" stroke-width="3.7"/><path d="M7.4 12.8 L8.4 11.8" stroke="#8a6a20" stroke-width="3"/></svg>
<svg class="r" style="left:352.00px;top:619.00px" width="12" height="6" viewBox="0 0 12 6"><path d="M0.8 0.9 H7.6 L11.6 4.9 H0.8 Z" fill="#7a7a7a"/><rect x="3" y="2.8" width="2" height="2.2" fill="#fff"/></svg>
<div class="r" style="left:319.00px;top:645.00px;width:912.00px;height:35.50px;background:#d0d0d0;"></div>
<div class="r" style="left:1121.10px;top:653.10px;width:100.80px;height:19.90px;background:#dc3d14;"></div>
<div class="t" style="left:1157.60px;top:657.73px;font-size:10.6px;color:#ffffff;"><u>C</u>lose</div>

</body></html>
